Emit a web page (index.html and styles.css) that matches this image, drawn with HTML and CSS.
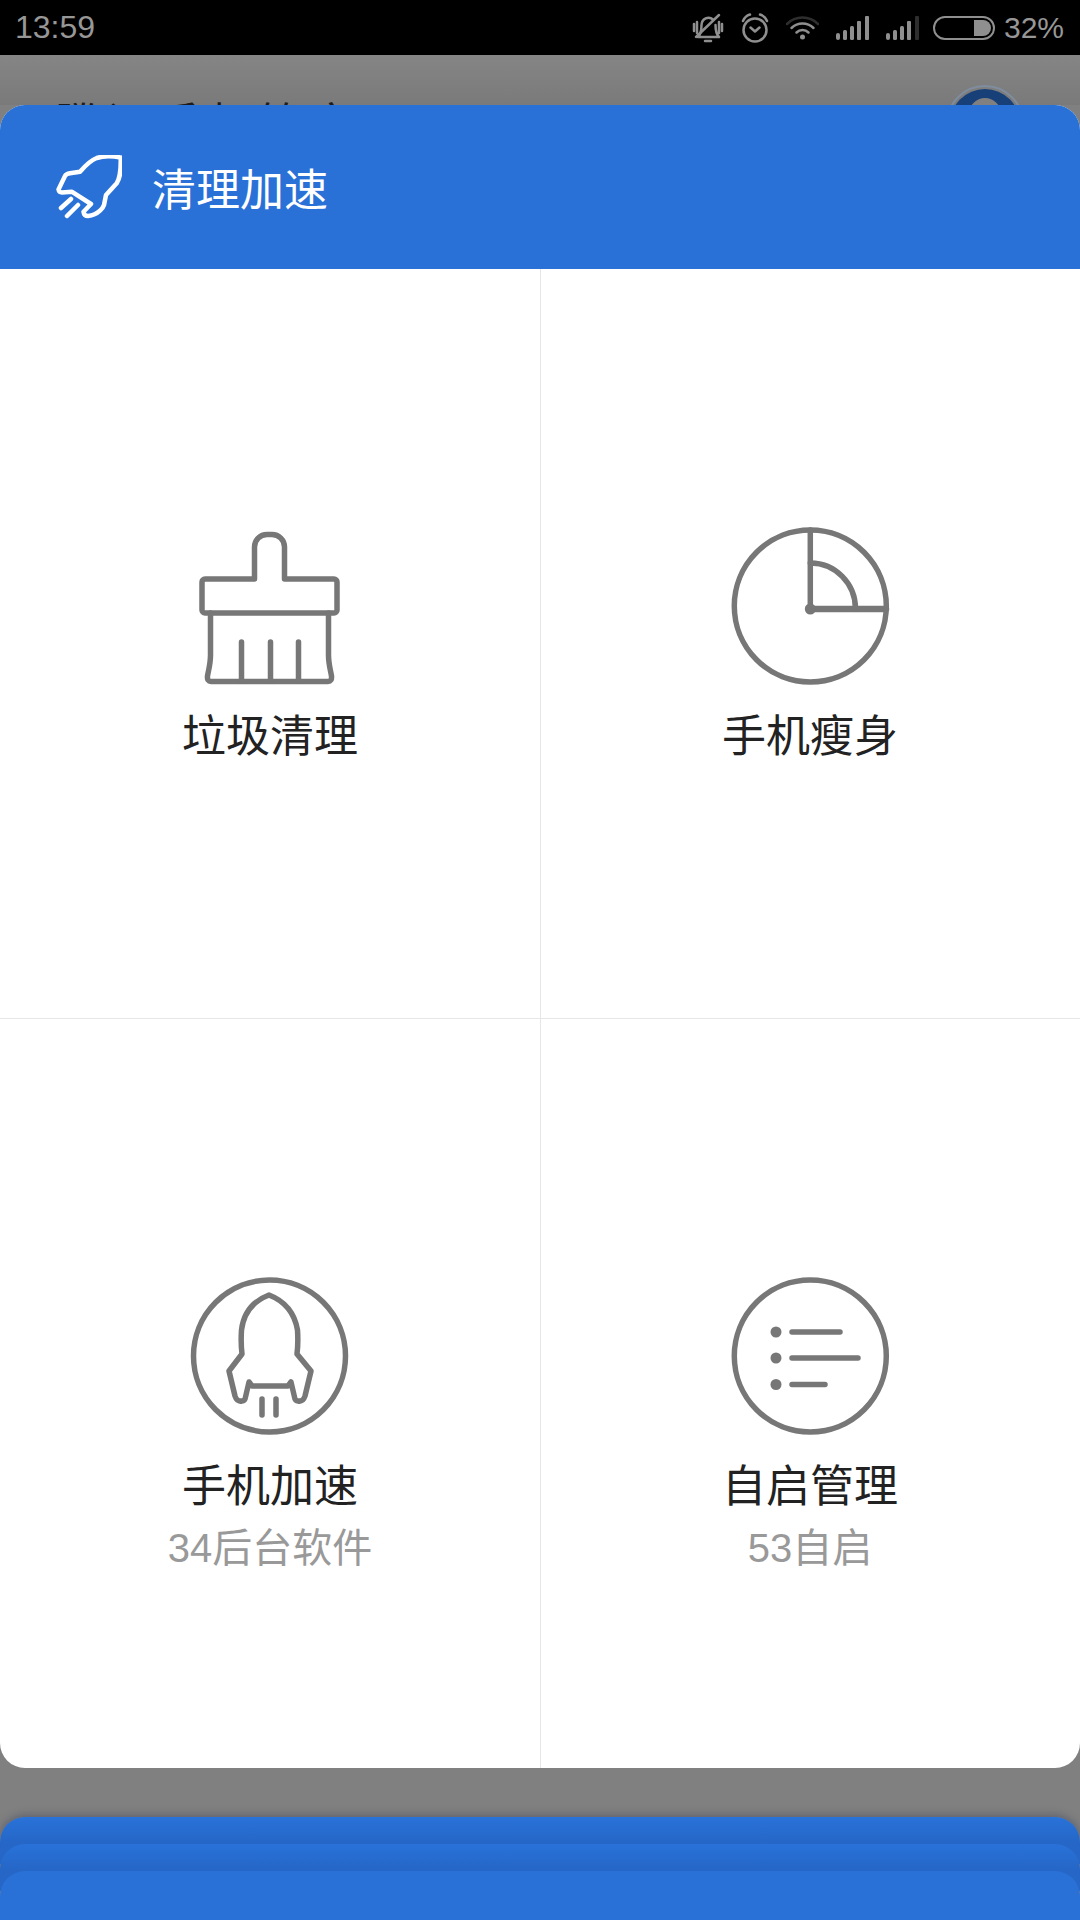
FILE: index.html
```html
<!DOCTYPE html>
<html lang="zh-CN">
<head>
    <meta charset="UTF-8">
    <meta name="viewport" content="width=device-width, initial-scale=1.0">
    <title>清理加速</title>
    <link rel="stylesheet" href="styles.css">
</head>
<body>
    <!-- Status bar -->
    <div class="status-bar">
        <span class="time">13:59</span>
        <div class="status-icons">
            <svg class="status-icon" width="32" height="30" viewBox="0 0 32 30">
                <path d="M6 24C9 21 9.500 17 9.500 12A7 7.500 0 0 1 21 6.500M23.500 12C23.500 17 24 21 27 24H6M13 28h6M2 11v7M5 9v11M27 9v11M30 11v7" />
                <path d="M4 24L27 2" />
            </svg>
            <svg class="status-icon" width="28" height="30" viewBox="0 0 28 30">
                <circle cx="14" cy="17" r="11.500" />
                <path d="M9.500 14.500l4.500 4 4.500-4M2 8Q4 3 9 1.500M26 8Q24 3 19 1.500" />
            </svg>
            <svg class="status-icon" width="33" height="24" viewBox="0 0 33 24">
                <path class="dim" d="M1 8a22 22 0 0 1 31 0" />
                <path d="M5.500 12a16 16 0 0 1 22 0M10.500 16.500a8.500 8.500 0 0 1 12 0" />
                <circle class="solid" cx="16.500" cy="21" r="2.500" />
            </svg>
            <svg class="status-bars" width="33" height="24" viewBox="0 0 33 24">
                <rect x="0" y="17" width="4" height="7" rx="2" />
                <rect x="7" y="14" width="4" height="10" rx="1.500" />
                <rect x="14" y="10" width="4" height="14" rx="1.500" />
                <rect x="21" y="5" width="4" height="19" rx="1" />
                <rect x="29" y="0" width="4" height="24" rx="1" />
            </svg>
            <svg class="status-bars" width="33" height="24" viewBox="0 0 33 24">
                <rect x="0" y="17" width="4" height="7" rx="2" />
                <rect x="7" y="14" width="4" height="10" rx="1.500" />
                <rect x="14" y="10" width="4" height="14" rx="1.500" />
                <rect x="21" y="5" width="4" height="19" rx="1" />
                <rect class="dark-bar" x="29" y="0" width="4" height="24" rx="1" />
            </svg>
            <svg class="status-icon battery" width="62" height="24" viewBox="0 0 62 24">
                <rect x="1" y="1" width="60" height="22" rx="11" />
                <path class="solid" d="M41 4h9a8 8 0 0 1 0 16h-9z" />
            </svg>
            <span class="battery-text">32%</span>
        </div>
    </div>

    <!-- Page behind the dialog, only its top edge shows -->
    <div class="backdrop">
        <span class="backdrop-title">腾讯手机管家</span>
        <svg class="avatar" width="80" height="80" viewBox="0 0 80 80">
            <circle class="avatar-ring" cx="40" cy="40" r="38" />
            <circle class="avatar-disc" cx="40" cy="40" r="35" />
            <circle class="avatar-head" cx="40" cy="30" r="16" />
        </svg>
    </div>

    <!-- Main card -->
    <div class="card">
        <div class="card-header">
            <svg class="header-icon" width="66" height="64" viewBox="56 155 66 64">
                <path d="M120.700 157.500C113 156 104 155.500 96.700 158C90 160.500 85 166 80 171.700L70 173.300Q66 174 65 176L58.500 189.500Q59 192.500 62 192.500L71.700 191.700L91 204L83.500 211.700Q84 216 88 216C93 215.500 97 213.500 100 210.700Q103 208 104 205L106 195L116.700 183.300C120 178 121 172 120.700 157.500Z" />
                <path d="M61 208L71 199M67 216L78 205" />
            </svg>
            <span class="header-title">清理加速</span>
        </div>
        <div class="tool-grid">
            <div class="tool">
                <svg class="tool-icon" width="200" height="190" viewBox="0 0 200 190">
                    <path d="M84.500 69V37a12.500 12.500 0 0 1 12.500-12.500h5A12.500 12.500 0 0 1 114.500 37V69H164a3 3 0 0 1 3 3V100a3 3 0 0 1-3 3H35a3 3 0 0 1-3-3V72a3 3 0 0 1 3-3Z" />
                    <path d="M40.500 103V145C40.500 154 38.500 160 37.500 166Q37 171.500 41 171.500H158Q162 171.500 161.500 166C160.500 160 158.500 154 158.500 145V103" />
                    <path d="M71.500 132V171M100.500 132V171M128.500 132V171" />
                </svg>
                <span class="tool-name">垃圾清理</span>
            </div>
            <div class="tool">
                <svg class="tool-icon" width="200" height="190" viewBox="0 0 200 190">
                    <circle cx="100.300" cy="96" r="76" />
                    <path d="M100.300 20V99" />
                    <path class="thick-line" d="M100.300 99H176" />
                    <path d="M100.300 53A45 46 0 0 1 145.500 99" />
                    <circle class="solid-icon" cx="100.300" cy="99" r="5.500" />
                </svg>
                <span class="tool-name">手机瘦身</span>
            </div>
            <div class="tool">
                <svg class="tool-icon" width="200" height="190" viewBox="0 0 200 190">
                    <circle cx="99.500" cy="96" r="76" />
                    <path d="M99 35C86 40 74 50 71.500 70C71 78 71 86 72 94L59 111L65 136Q67 142 72 141Q75 141 75.500 137L79 122L82 126H118L121 122L124.500 137Q125 141 128 141Q133 142 135 136L141 111L127 94C128 86 128 78 127.500 70C124 50 112 40 99 35Z" />
                    <path d="M92 139V155M106 139V155" />
                </svg>
                <span class="tool-name">手机加速</span>
                <span class="tool-note">34后台软件</span>
            </div>
            <div class="tool">
                <svg class="tool-icon" width="200" height="190" viewBox="0 0 200 190">
                    <circle cx="100.300" cy="96" r="76" />
                    <circle class="solid-icon" cx="66" cy="72" r="5.500" />
                    <circle class="solid-icon" cx="66" cy="98" r="5.500" />
                    <circle class="solid-icon" cx="66" cy="124.500" r="5.500" />
                    <path d="M82 72H130M82 98H148M82 124.500H115" />
                </svg>
                <span class="tool-name">自启管理</span>
                <span class="tool-note">53自启</span>
            </div>
        </div>
    </div>

    <!-- Collapsed cards at the bottom -->
    <div class="card-stack">
        <div class="stack-card"></div>
        <div class="stack-card"></div>
        <div class="stack-card"></div>
    </div>
</body>
</html>
```

FILE: styles.css
```css
body {
    margin: 0;
    padding: 0;
    height: 1920px;
    overflow: hidden;
    background-color: #808080;
    font-family: "Liberation Sans", "Noto Sans CJK SC", sans-serif;
}

.status-bar {
    height: 55px;
    background-color: #000;
    color: #979797;
    display: flex;
    align-items: center;
    justify-content: space-between;
    padding: 0 16px 0 15px;
}

.time {
    font-size: 32px;
}

.status-icons {
    display: flex;
    align-items: center;
    gap: 17px;
}

.status-icon {
    fill: none;
    stroke: #8f8f8f;
    stroke-width: 2.5;
    stroke-linecap: round;
    stroke-linejoin: round;
}

.status-icon .solid {
    fill: #8f8f8f;
    stroke: none;
}

.status-icon .dim {
    stroke: #2e2e2e;
}

.status-bars {
    fill: #8f8f8f;
}

.status-bars .dark-bar {
    fill: #2e2e2e;
}

.battery {
    margin-left: -3px;
    stroke-width: 2;
}

.battery-text {
    font-size: 30px;
    margin-left: -8px;
}

.backdrop {
    height: 50px;
    overflow: hidden;
    display: flex;
    justify-content: space-between;
    padding: 0 55px 0 55px;
    background: linear-gradient(#858585, #7a7a7a);
}

.backdrop-title {
    font-size: 44px;
    line-height: 60px;
    margin-top: 40px;
    letter-spacing: 7px;
    color: #1c1c1c;
}

.avatar {
    margin-top: 29px;
}

.avatar-ring {
    fill: none;
    stroke: #7f8d9f;
    stroke-width: 2;
}

.avatar-disc {
    fill: #173f78;
}

.avatar-head {
    fill: #808080;
}

.card {
    height: 1663px;
    background-color: #fff;
    border-radius: 25px;
    overflow: hidden;
}

.card-header {
    height: 164px;
    background-color: #2971d7;
    display: flex;
    align-items: center;
    gap: 30px;
    padding-left: 56px;
}

.header-icon {
    fill: none;
    stroke: #fff;
    stroke-width: 4.500;
    stroke-linecap: round;
    stroke-linejoin: round;
}

.header-title {
    font-size: 44px;
    color: #fff;
}

.tool-grid {
    display: grid;
    grid-template-columns: 540px 540px;
    grid-template-rows: 749px 750px;
}

.tool {
    display: flex;
    flex-direction: column;
    align-items: center;
    padding-top: 241px;
    box-sizing: border-box;
}

.tool:nth-child(even) {
    border-left: 1px solid #e6e6e6;
    padding-right: 1px;
}

.tool:nth-child(n+3) {
    border-top: 1px solid #e6e6e6;
}

.tool-icon {
    fill: none;
    stroke: #777;
    stroke-width: 5.500;
    stroke-linecap: round;
    stroke-linejoin: round;
}

.tool-icon .solid-icon {
    fill: #777;
    stroke: none;
}

.tool-icon .thick-line {
    stroke-width: 6.500;
}

.tool-name {
    font-size: 44px;
    line-height: 60px;
    margin-top: 7px;
    color: #222;
}

.tool-note {
    font-size: 40px;
    line-height: 50px;
    margin-top: 6px;
    color: #999;
}

.card-stack {
    margin-top: 49px;
}

.stack-card {
    height: 47px;
    margin-bottom: -20px;
    border-radius: 25px 25px 0 0;
    background: linear-gradient(#2972d9, #2566c6 27px);
}

.stack-card:first-child {
    box-shadow: 0 -2px 8px rgba(30, 40, 80, 0.35);
}

.stack-card:last-child {
    height: 60px;
    background: #2971d7;
}
```
